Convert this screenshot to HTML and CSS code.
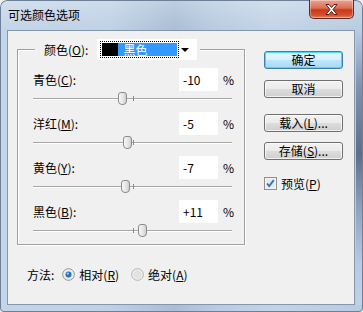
FILE: index.html
```html
<!DOCTYPE html>
<html>
<head>
    <title>可选颜色选项</title>
    <meta charset="utf-8">
    <link rel="stylesheet" href="styles.css">
</head>
<body>
    <div class="window">
        <div class="titlebar">
            <span class="title">可选颜色选项</span>
            <button class="close-button" title="关闭">
                <svg width="15" height="13" viewBox="0 0 15 13">
                    <path d="M2 1.5h3l2.5 3 2.5-3h3l-4 5 4 5h-3l-2.5-3-2.5 3h-3l4-5z" fill="#fff" stroke="#5a1a10" stroke-width="1" stroke-linejoin="round"/>
                </svg>
            </button>
        </div>

        <div class="client">
            <div class="main">
                <fieldset class="group">
                    <legend class="group-legend">
                        <span class="legend-label">颜色(<u>O</u>):</span>
                        <div class="select">
                            <span class="select-value">
                                <span class="swatch"></span>
                                <span class="select-text">黑色</span>
                            </span>
                            <span class="select-arrow"></span>
                        </div>
                    </legend>

                    <div class="adjust">
                        <div class="adjust-head">
                            <span class="adjust-label">青色(<u>C</u>):</span>
                            <span class="num-box">-10</span>
                            <span class="pct">%</span>
                        </div>
                        <div class="slider">
                            <span class="track"></span>
                            <span class="tick"></span>
                            <span class="thumb" style="left: 45%;"></span>
                        </div>
                    </div>

                    <div class="adjust">
                        <div class="adjust-head">
                            <span class="adjust-label">洋红(<u>M</u>):</span>
                            <span class="num-box">-5</span>
                            <span class="pct">%</span>
                        </div>
                        <div class="slider">
                            <span class="track"></span>
                            <span class="tick"></span>
                            <span class="thumb" style="left: 47.5%;"></span>
                        </div>
                    </div>

                    <div class="adjust">
                        <div class="adjust-head">
                            <span class="adjust-label">黄色(<u>Y</u>):</span>
                            <span class="num-box">-7</span>
                            <span class="pct">%</span>
                        </div>
                        <div class="slider">
                            <span class="track"></span>
                            <span class="tick"></span>
                            <span class="thumb" style="left: 46.5%;"></span>
                        </div>
                    </div>

                    <div class="adjust">
                        <div class="adjust-head">
                            <span class="adjust-label">黑色(<u>B</u>):</span>
                            <span class="num-box">+11</span>
                            <span class="pct">%</span>
                        </div>
                        <div class="slider">
                            <span class="track"></span>
                            <span class="tick"></span>
                            <span class="thumb" style="left: 55.5%;"></span>
                        </div>
                    </div>
                </fieldset>

                <div class="method">
                    <span class="method-label">方法:</span>
                    <label class="radio">
                        <svg width="13" height="13" viewBox="0 0 13 13">
                            <circle cx="6.5" cy="6.5" r="5.8" fill="#f4f4f4" stroke="#8e8f8f"/>
                            <circle cx="6.5" cy="6.5" r="4.2" fill="#e6e6e6"/>
                            <circle cx="6.5" cy="6.5" r="3" fill="#2b71b8"/>
                            <circle cx="5.8" cy="5.6" r="1.2" fill="#9ccaf0"/>
                        </svg>
                        <span>相对(<u>R</u>)</span>
                    </label>
                    <label class="radio">
                        <svg width="13" height="13" viewBox="0 0 13 13">
                            <circle cx="6.5" cy="6.5" r="5.8" fill="#f4f4f4" stroke="#b0b0b0"/>
                            <circle cx="6.5" cy="6.5" r="4.2" fill="#e2e2e2"/>
                        </svg>
                        <span>绝对(<u>A</u>)</span>
                    </label>
                </div>
            </div>

            <div class="actions">
                <button class="btn btn-default">确定</button>
                <button class="btn btn-cancel">取消</button>
                <button class="btn btn-load">载入(<u>L</u>)...</button>
                <button class="btn">存储(<u>S</u>)...</button>
                <label class="checkbox">
                    <svg width="13" height="13" viewBox="0 0 13 13">
                        <rect x="0.5" y="0.5" width="12" height="12" fill="#f2f2f2" stroke="#8e8f8f"/>
                        <rect x="2.5" y="2.5" width="8" height="8" fill="#dfe8f1"/>
                        <path d="M3 6.5l2.2 2.6 4.6-6" fill="none" stroke="#3a6fb0" stroke-width="1.8"/>
                    </svg>
                    <span>预览(<u>P</u>)</span>
                </label>
            </div>
        </div>
    </div>
</body>
</html>
```

FILE: styles.css
```css
/* 基础样式 */
body {
    margin: 0;
    font-family: "Noto Sans CJK SC", "Liberation Sans", sans-serif;
    font-size: 12px;
    color: #000;
    background: #f0f0f0;
}

u {
    text-decoration: underline;
    text-underline-offset: 1px;
}

/* 窗口边框 */
.window {
    width: 363px;
    height: 312px;
    box-sizing: border-box;
    padding: 0 8px 7px 7px;
    border-radius: 7px 7px 4px 4px;
    display: flex;
    flex-direction: column;
    background:
        linear-gradient(180deg, #b9cce1 0%, #8194ab 20%, #5d6f86 45%, #8ea2b9 65%, #b7cae0 85%, #c0d2e6 100%) right 1px top 30px / 6px 275px no-repeat,
        linear-gradient(180deg, rgba(255,255,255,0.25) 0%, rgba(255,255,255,0) 30px),
        linear-gradient(90deg, #c4d5e7 0%, #bfd1e5 30%, #a9bed6 48%, #b7cae0 58%, #c3d4e7 75%, #b8cbe0 100%);
    box-shadow: inset 0 0 0 1px #6d8098;
}

.titlebar {
    height: 30px;
    display: flex;
    align-items: flex-start;
}

.title {
    padding: 7px 0 0 1px;
    line-height: 16px;
    color: #000;
}

.close-button {
    margin-left: auto;
    margin-right: 1px;
    width: 45px;
    height: 19px;
    border: 1px solid #5d2b25;
    border-top: none;
    border-radius: 0 0 5px 5px;
    background: linear-gradient(180deg, #eba493 0%, #da6e55 45%, #c7381a 55%, #d4522f 85%, #e4866a 100%);
    box-shadow: inset 0 0 0 1px rgba(255,255,255,0.35);
    display: flex;
    align-items: center;
    justify-content: center;
    padding: 0;
}

/* 客户区 */
.client {
    flex: 1;
    background: #f0f0f0;
    border: 1px solid #8397ae;
    display: flex;
}

.main {
    width: 237px;
}

.group {
    margin: 8px 0 0 9px;
    padding: 8px 11px 0 15px;
    width: 228px;
    height: 206px;
    box-sizing: border-box;
    border: 1px solid #a0a0a0;
    box-shadow: inset 1px 1px #fff, 1px 1px #fff;
    min-inline-size: 0;
}

.group-legend {
    padding: 0 3px 0 9px;
    margin-left: 2px;
    display: flex;
    align-items: center;
    background: #f0f0f0;
}

.legend-label {
    margin-right: 9px;
}

.select {
    width: 100px;
    height: 21px;
    background: #fff;
    display: flex;
    align-items: center;
    box-sizing: border-box;
    padding: 0 4px 0 3px;
}

.select-value {
    display: flex;
    align-items: stretch;
    height: 17px;
    width: 79px;
    border: 1px dotted #000;
    box-sizing: border-box;
    padding: 1px;
}

.swatch {
    width: 16px;
    background: #000;
}

.select-text {
    flex: 1;
    background: #3399ff;
    color: #fff;
    line-height: 13px;
    padding-left: 5px;
    font-size: 12px;
}

.select-arrow {
    margin-left: auto;
    width: 0;
    height: 0;
    border-left: 4px solid transparent;
    border-right: 4px solid transparent;
    border-top: 4px solid #000;
    margin-right: 4px;
}

/* 调整行 */
.adjust {
    height: 44px;
}

.adjust-head {
    display: flex;
    align-items: center;
    height: 23px;
}

.adjust-label {
    flex: 1;
}

.num-box {
    width: 39px;
    height: 23px;
    box-sizing: border-box;
    background: #fff;
    padding-left: 4px;
    line-height: 23px;
}

.pct {
    width: 10px;
    margin-left: 5px;
}

.slider {
    position: relative;
    height: 14px;
    margin-right: 1px;
}

.track {
    position: absolute;
    left: 0;
    right: 0;
    top: 7px;
    height: 1px;
    background: #a7a7a7;
    border-bottom: 1px solid #fff;
}

.tick {
    position: absolute;
    left: 50%;
    top: 5px;
    width: 1px;
    height: 5px;
    background: #8a8a8a;
}

.thumb {
    position: absolute;
    top: 1px;
    width: 9px;
    height: 13px;
    margin-left: -5px;
    box-sizing: border-box;
    border: 1px solid #8b8b8b;
    border-radius: 3px 3px 4px 4px;
    background: linear-gradient(90deg, #f7f7f7 0%, #e4e4e4 60%, #cfcfcf 100%);
}

/* 方法 */
.method {
    display: flex;
    align-items: center;
    margin: 21px 0 0 19px;
    height: 16px;
}

.method-label {
    margin-right: 8px;
}

.radio {
    display: flex;
    align-items: center;
    gap: 4px;
    margin-right: 12px;
}

/* 右侧按钮 */
.actions {
    margin: 20px 0 0 19px;
    width: 79px;
    display: flex;
    flex-direction: column;
}

.btn {
    height: 18px;
    padding: 0;
    font-family: inherit;
    font-size: 12px;
    line-height: 16px;
    color: #000;
    border: 1px solid #707070;
    border-radius: 3px;
    background: linear-gradient(180deg, #f2f2f2 0%, #ebebeb 49%, #dddddd 50%, #cfcfcf 100%);
    box-shadow: inset 0 0 0 1px rgba(255,255,255,0.7);
    margin-bottom: 10px;
}

.btn-default {
    border-color: #3c7fb1;
    box-shadow: inset 0 0 0 1px #48d8fb;
    background: linear-gradient(180deg, #eaf6fd 0%, #d9f0fc 49%, #bee6fd 50%, #a7d9f5 100%);
    margin-bottom: 11px;
}

.btn-cancel {
    margin-bottom: 16px;
}

.checkbox {
    display: flex;
    align-items: center;
    gap: 4px;
    margin-top: 5px;
}
```
